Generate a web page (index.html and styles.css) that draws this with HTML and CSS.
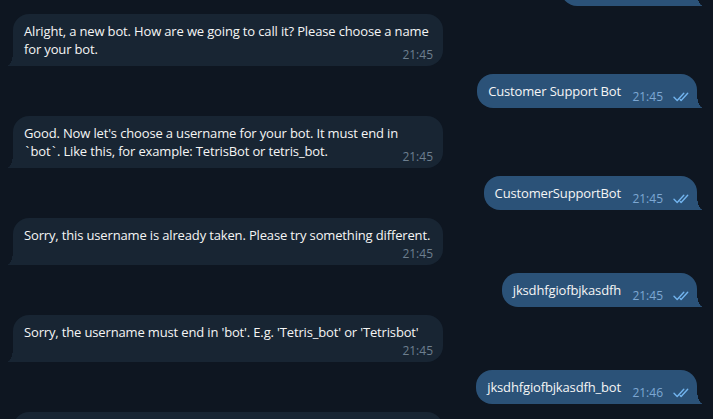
FILE: index.html
```html
<!DOCTYPE html>
<html>
<head>
<meta charset="utf-8">
<link rel="stylesheet" href="styles.css">
</head>
<body>
<div class="chat">
  <div class="row out first">
    <div class="bubble out"><span class="text">/newbot</span><span class="spacer"></span><span class="meta"><span class="time">21:45</span><svg class="checks" viewBox="0 0 17 10" width="17" height="10"><path d="M1 5.2l3.2 3.3 6.6-7.3"/><path d="M7.2 7.6l0.9 0.9 6.6-7.3"/></svg></span></div>
  </div>
  <div class="row in">
    <div class="bubble in"><span class="text">Alright, a new bot. How are we going to call it? Please choose a name for your bot.</span><span class="spacer"></span><span class="meta"><span class="time">21:45</span></span></div>
  </div>
  <div class="row out">
    <div class="bubble out"><span class="text">Customer Support Bot</span><span class="spacer"></span><span class="meta"><span class="time">21:45</span><svg class="checks" viewBox="0 0 17 10" width="17" height="10"><path d="M1 5.2l3.2 3.3 6.6-7.3"/><path d="M7.2 7.6l0.9 0.9 6.6-7.3"/></svg></span></div>
  </div>
  <div class="row in">
    <div class="bubble in"><span class="text">Good. Now let's choose a username for your bot. It must end in <span class="tick">`</span>bot<span class="tick">`</span>. Like this, for example: TetrisBot or tetris_bot.</span><span class="spacer"></span><span class="meta"><span class="time">21:45</span></span></div>
  </div>
  <div class="row out">
    <div class="bubble out"><span class="text">CustomerSupportBot</span><span class="spacer"></span><span class="meta"><span class="time">21:45</span><svg class="checks" viewBox="0 0 17 10" width="17" height="10"><path d="M1 5.2l3.2 3.3 6.6-7.3"/><path d="M7.2 7.6l0.9 0.9 6.6-7.3"/></svg></span></div>
  </div>
  <div class="row in">
    <div class="bubble in"><span class="text">Sorry, this username is already taken. Please try something different.</span><span class="spacer"></span><span class="meta"><span class="time">21:45</span></span></div>
  </div>
  <div class="row out">
    <div class="bubble out"><span class="text">jksdhfgiofbjkasdfh</span><span class="spacer"></span><span class="meta"><span class="time">21:45</span><svg class="checks" viewBox="0 0 17 10" width="17" height="10"><path d="M1 5.2l3.2 3.3 6.6-7.3"/><path d="M7.2 7.6l0.9 0.9 6.6-7.3"/></svg></span></div>
  </div>
  <div class="row in">
    <div class="bubble in"><span class="text">Sorry, the username must end in 'bot'. E.g. 'Tetris_bot' or 'Tetrisbot'</span><span class="spacer"></span><span class="meta"><span class="time">21:45</span></span></div>
  </div>
  <div class="row out">
    <div class="bubble out"><span class="text">jksdhfgiofbjkasdfh_bot</span><span class="spacer"></span><span class="meta"><span class="time">21:46</span><svg class="checks" viewBox="0 0 17 10" width="17" height="10"><path d="M1 5.2l3.2 3.3 6.6-7.3"/><path d="M7.2 7.6l0.9 0.9 6.6-7.3"/></svg></span></div>
  </div>
  <div class="row in">
    <div class="bubble in"><span class="text">Done! Congratulations on your new bot. You will find it at t.me/jksdhfgiofbjkasdfh_bot. You can now add a description, about section and profile picture for your bot.</span><span class="spacer"></span><span class="meta"><span class="time">21:46</span></span></div>
  </div>
</div>
</body>
</html>
```

FILE: styles.css
```css
html, body {
  margin: 0;
  padding: 0;
  background: #0e1621;
  height: 419px;
  overflow: hidden;
}

.chat {
  display: flex;
  flex-direction: column;
  gap: 8px;
  padding: 0 16px 0 13px;
  font-family: "Open Sans", "Noto Sans", sans-serif;
  font-size: 13px;
  line-height: 18px;
  letter-spacing: -0.15px;
  color: #f5f5f5;
}

.row {
  display: flex;
}

.row.in {
  justify-content: flex-start;
}

.row.out {
  justify-content: flex-end;
}

.row.first {
  margin-top: -28px;
}

.bubble {
  position: relative;
  display: flow-root;
  box-sizing: border-box;
  max-width: 430px;
  padding: 8px 10px 8px 11px;
  border-radius: 16px;
}

.bubble.in {
  background: #182533;
  border-bottom-left-radius: 0;
}

.bubble.out {
  background: #2b5278;
  border-bottom-right-radius: 0;
}

.bubble::before {
  content: "";
  position: absolute;
  bottom: 0;
  width: 6px;
  height: 14px;
}

.bubble.in::before {
  left: -6px;
  background: radial-gradient(6px 14px at 0 0, transparent 97%, #182533 100%);
}

.bubble.out::before {
  right: -6px;
  background: radial-gradient(6px 14px at 100% 0, transparent 97%, #2b5278 100%);
}

.tick {
  margin: 0 1.5px;
}

.spacer {
  float: right;
  height: 13px;
}

.bubble.in .spacer {
  width: 42px;
}

.bubble.out .spacer {
  width: 66px;
}

.meta {
  position: absolute;
  bottom: 4px;
  display: flex;
  align-items: center;
  gap: 10px;
  font-size: 12px;
  line-height: 14px;
  letter-spacing: 0;
}

.bubble.in .meta {
  right: 10px;
  color: #6d7f8f;
}

.bubble.out .meta {
  right: 7px;
  color: #7da8d3;
}

.checks {
  display: block;
  fill: none;
  stroke: #72b4ee;
  stroke-width: 1.4;
  stroke-linecap: round;
  stroke-linejoin: round;
}
```
